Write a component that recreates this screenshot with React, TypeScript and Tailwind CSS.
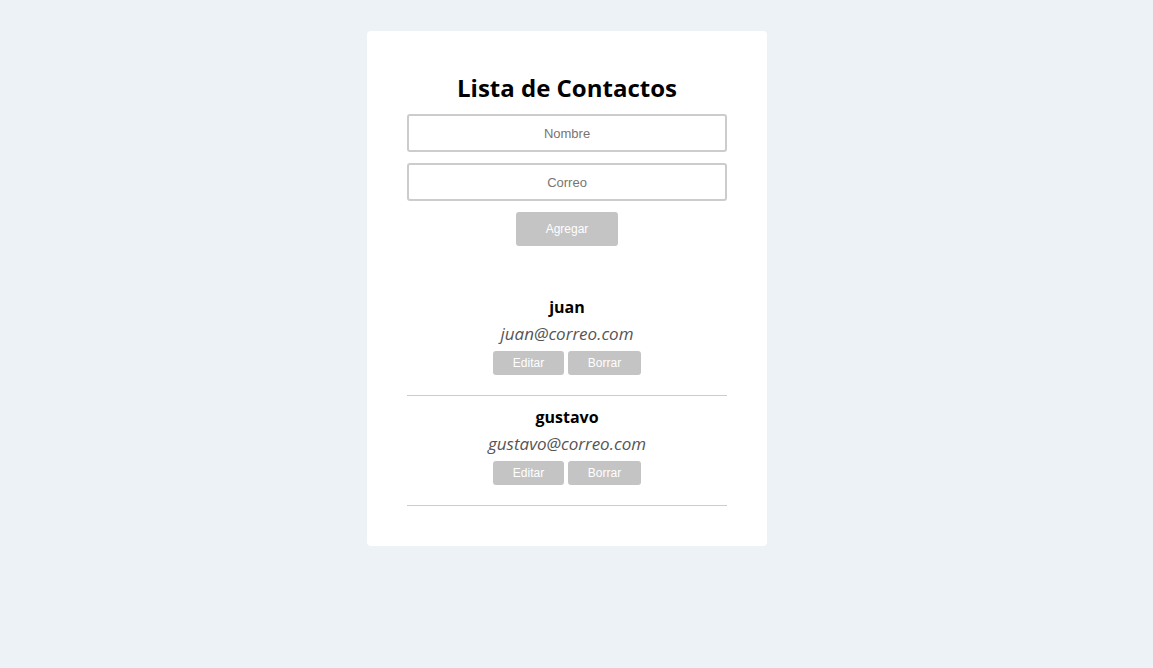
import { useState } from 'react'

type Contacto = { nombre: string; correo: string }

export default function App() {
  const [contactos] = useState<Contacto[]>([
    { nombre: 'juan', correo: 'juan@correo.com' },
    { nombre: 'gustavo', correo: 'gustavo@correo.com' },
  ])

  return (
    <div className="min-h-screen bg-[#edf2f6] pt-[31px] pr-[19px] font-['Open_Sans',sans-serif]">
      {/* Tarjeta principal */}
      <div className="mx-auto w-[400px] rounded-[4px] bg-white px-10 pt-10 pb-10">
        <h1 className="text-center text-[24px] leading-[33px] font-bold text-black">
          Lista de Contactos
        </h1>

        {/* Formulario */}
        <form className="mt-[10px] flex flex-col items-center">
          <input
            type="text"
            placeholder="Nombre"
            className="h-[38px] w-full rounded-[3px] border-2 border-[#cccccc] text-center font-['Liberation_Sans',Arial,sans-serif] text-[13px] placeholder:text-[#757575] focus:outline-none"
          />
          <input
            type="email"
            placeholder="Correo"
            className="mt-[11px] h-[38px] w-full rounded-[3px] border-2 border-[#cccccc] text-center font-['Liberation_Sans',Arial,sans-serif] text-[13px] placeholder:text-[#757575] focus:outline-none"
          />
          <button
            type="button"
            className="mt-[11px] h-[34px] w-[102px] rounded-[3px] bg-[#c4c4c4] font-['Liberation_Sans',Arial,sans-serif] text-[12px] text-white"
          >
            Agregar
          </button>
        </form>

        {/* Lista */}
        <ul className="mt-[40px]">
          {contactos.map((c) => (
            <li key={c.nombre} className="border-b border-[#cccccc] pt-[10px] pb-[20px] text-center">
              <p className="text-[16px] leading-[22px] font-bold text-black">{c.nombre}</p>
              <p className="mt-[3px] text-[17px] leading-[25px] italic text-[#555555]">{c.correo}</p>
              <div className="mt-[5px] flex justify-center gap-[4px] font-['Liberation_Sans',Arial,sans-serif] text-[12px] text-white">
                <button className="h-[24px] w-[71px] rounded-[3px] bg-[#c4c4c4]">Editar</button>
                <button className="h-[24px] w-[73px] rounded-[3px] bg-[#c4c4c4]">Borrar</button>
              </div>
            </li>
          ))}
        </ul>
      </div>
    </div>
  )
}
